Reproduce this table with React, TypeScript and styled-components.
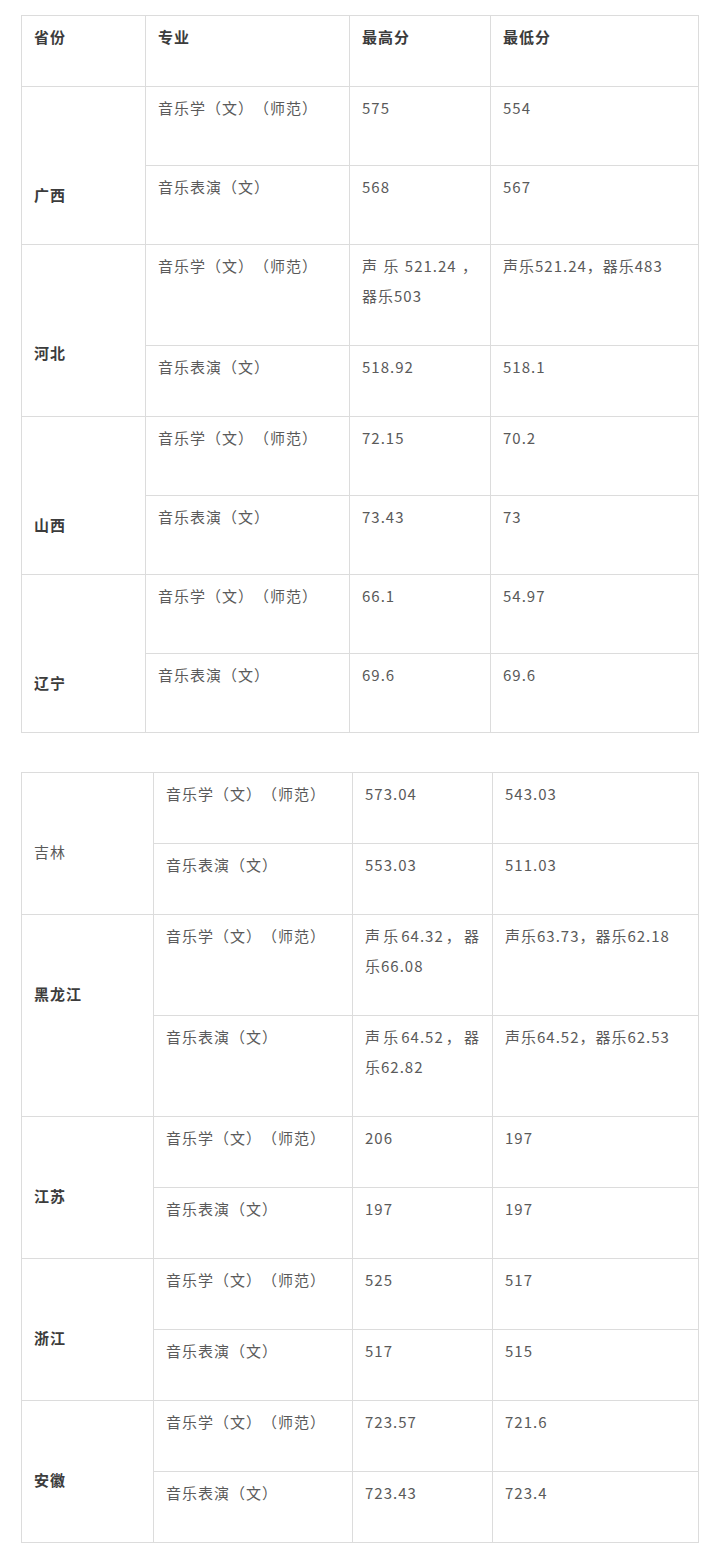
import React from "react";
import styled, { createGlobalStyle } from "styled-components";

const GlobalStyle = createGlobalStyle`
  body {
    margin: 0;
    background: #fff;
    font-family: "Noto Sans CJK SC", "Noto Sans", sans-serif;
  }
`;

type Row = { major: string; hi: string[]; lo: string[]; h: number };
type Group = { province: string; bold?: boolean; rows: Row[] };

const NORMAL = "音乐学（文）（师范）";
const PERFORM = "音乐表演（文）";

const tableOne: Group[] = [
  {
    province: "广西",
    bold: true,
    rows: [
      { major: NORMAL, hi: ["575"], lo: ["554"], h: 79 },
      { major: PERFORM, hi: ["568"], lo: ["567"], h: 79 },
    ],
  },
  {
    province: "河北",
    bold: true,
    rows: [
      {
        major: NORMAL,
        hi: ["声乐521.24，", "器乐503"],
        lo: ["声乐521.24，器乐483"],
        h: 101,
      },
      { major: PERFORM, hi: ["518.92"], lo: ["518.1"], h: 71 },
    ],
  },
  {
    province: "山西",
    bold: true,
    rows: [
      { major: NORMAL, hi: ["72.15"], lo: ["70.2"], h: 79 },
      { major: PERFORM, hi: ["73.43"], lo: ["73"], h: 79 },
    ],
  },
  {
    province: "辽宁",
    bold: true,
    rows: [
      { major: NORMAL, hi: ["66.1"], lo: ["54.97"], h: 79 },
      { major: PERFORM, hi: ["69.6"], lo: ["69.6"], h: 79 },
    ],
  },
];

const tableTwo: Group[] = [
  {
    province: "吉林",
    rows: [
      { major: NORMAL, hi: ["573.04"], lo: ["543.03"], h: 71 },
      { major: PERFORM, hi: ["553.03"], lo: ["511.03"], h: 71 },
    ],
  },
  {
    province: "黑龙江",
    bold: true,
    rows: [
      {
        major: NORMAL,
        hi: ["声乐64.32，器", "乐66.08"],
        lo: ["声乐63.73，器乐62.18"],
        h: 101,
      },
      {
        major: PERFORM,
        hi: ["声乐64.52，器", "乐62.82"],
        lo: ["声乐64.52，器乐62.53"],
        h: 101,
      },
    ],
  },
  {
    province: "江苏",
    bold: true,
    rows: [
      { major: NORMAL, hi: ["206"], lo: ["197"], h: 71 },
      { major: PERFORM, hi: ["197"], lo: ["197"], h: 71 },
    ],
  },
  {
    province: "浙江",
    bold: true,
    rows: [
      { major: NORMAL, hi: ["525"], lo: ["517"], h: 71 },
      { major: PERFORM, hi: ["517"], lo: ["515"], h: 71 },
    ],
  },
  {
    province: "安徽",
    bold: true,
    rows: [
      { major: NORMAL, hi: ["723.57"], lo: ["721.6"], h: 71 },
      { major: PERFORM, hi: ["723.43"], lo: ["723.4"], h: 71 },
    ],
  },
];

const Page = styled.div`
  padding: 15px 18px 8px 21px;
  display: flex;
  flex-direction: column;
  gap: 39px;
`;

const Table = styled.table`
  width: 677px;
  border-collapse: collapse;
  table-layout: fixed;
`;

const Tr = styled.tr<{ $h: number }>`
  height: ${(p) => p.$h}px;
`;

const Td = styled.td<{ $top?: number; $strong?: boolean }>`
  border: 1px solid #dcdcdc;
  vertical-align: top;
  padding: ${(p) => p.$top ?? 6}px 12px 0 12px;
  font-size: 15px;
  line-height: 30px;
  letter-spacing: 1px;
  text-spacing-trim: space-all;
  color: ${(p) => (p.$strong ? "#3c3c3c" : "#5a5a5a")};
  font-weight: ${(p) => (p.$strong ? 700 : 400)};
  overflow: hidden;
  white-space: nowrap;
`;

const Line = styled.div<{ $spread?: boolean }>`
  text-align: ${(p) => (p.$spread ? "justify" : "left")};
  text-align-last: ${(p) => (p.$spread ? "justify" : "auto")};
`;

const Lines: React.FC<{ lines: string[] }> = ({ lines }) => (
  <>
    {lines.map((l, i) => (
      <Line key={i} $spread={lines.length > 1 && i < lines.length - 1}>
        {l}
      </Line>
    ))}
  </>
);

const ScoreTable: React.FC<{
  groups: Group[];
  cols: number[];
  provinceTop: number;
  header?: boolean;
}> = ({ groups, cols, provinceTop, header }) => (
  <Table lang="zh-CN">
    <colgroup>
      {cols.map((w, i) => (
        <col key={i} style={{ width: w }} />
      ))}
    </colgroup>
    <tbody>
      {header && (
        <Tr $h={71}>
          <Td $strong>省份</Td>
          <Td $strong>专业</Td>
          <Td $strong>最高分</Td>
          <Td $strong>最低分</Td>
        </Tr>
      )}
      {groups.map((g) =>
        g.rows.map((r, i) => (
          <Tr key={g.province + i} $h={r.h}>
            {i === 0 && (
              <Td rowSpan={g.rows.length} $top={provinceTop} $strong={g.bold}>
                {g.province}
              </Td>
            )}
            <Td>{r.major}</Td>
            <Td>
              <Lines lines={r.hi} />
            </Td>
            <Td>
              <Lines lines={r.lo} />
            </Td>
          </Tr>
        ))
      )}
    </tbody>
  </Table>
);

export default function App() {
  return (
    <>
      <GlobalStyle />
      <Page>
        <ScoreTable
          header
          groups={tableOne}
          cols={[124, 204, 141, 208]}
          provinceTop={93}
        />
        <ScoreTable
          groups={tableTwo}
          cols={[132, 199, 140, 206]}
          provinceTop={64}
        />
      </Page>
    </>
  );
}
